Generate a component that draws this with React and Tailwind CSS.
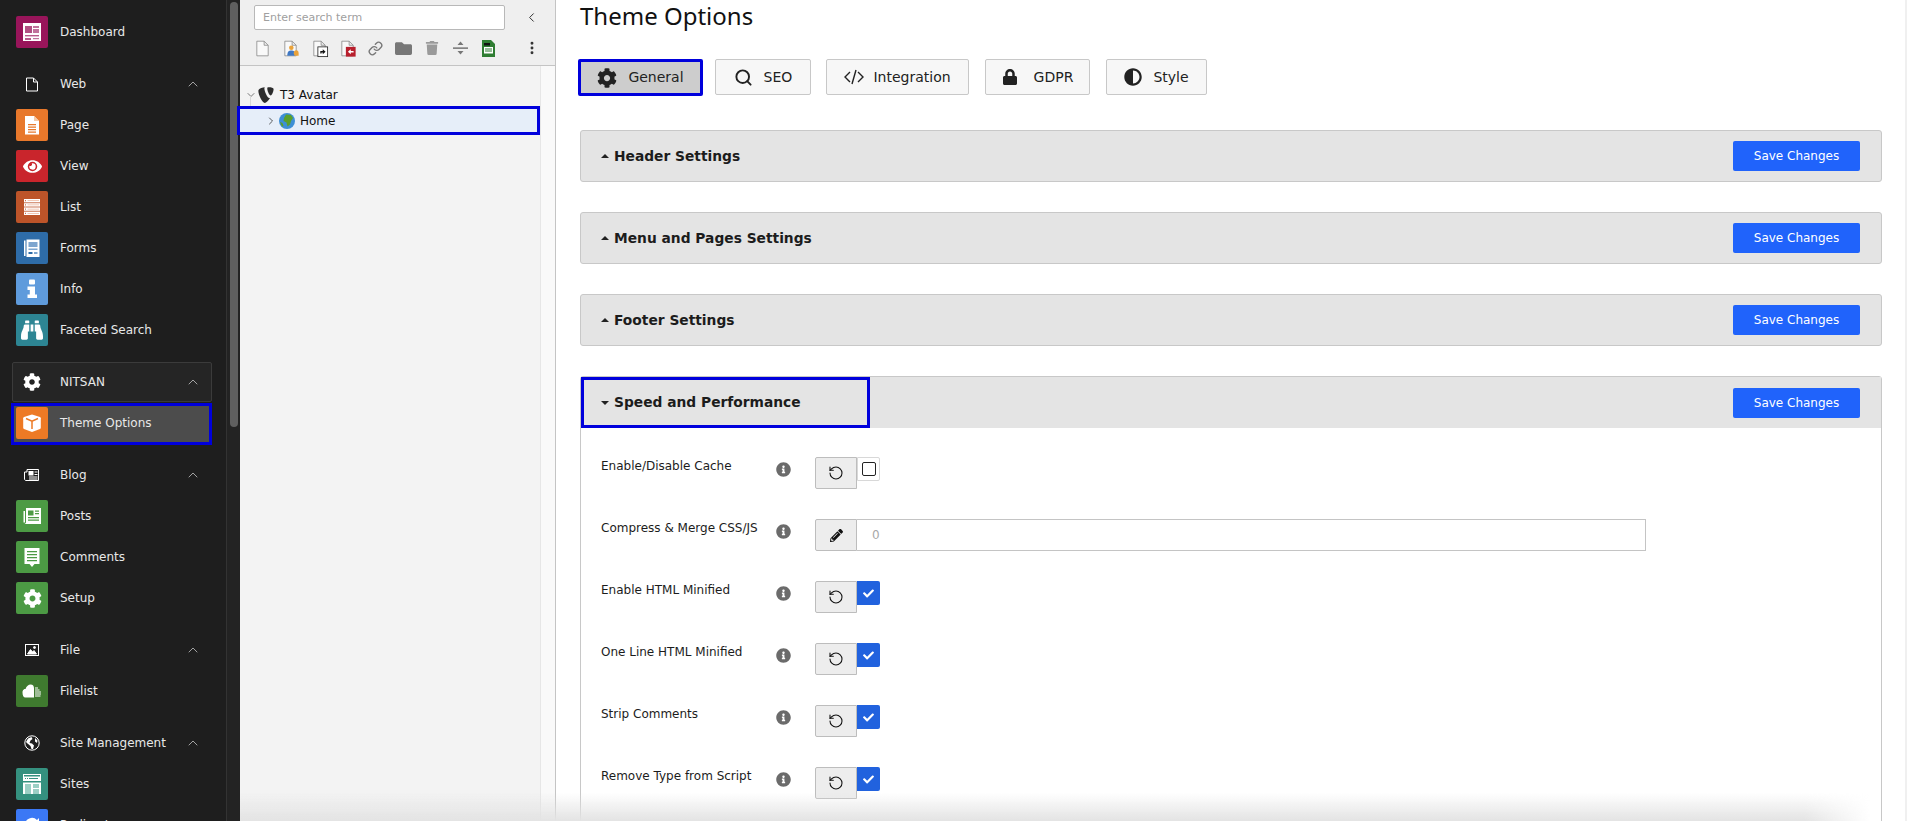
import React from "react";
import { FaCog, FaEye, FaBinoculars, FaTypo3, FaLock, FaAdjust, FaInfoCircle, FaPencilAlt, FaFolder, FaTrash, FaCheck } from "react-icons/fa";
import { ChevronUp, ChevronLeft, ChevronRight, ChevronDown, RotateCcw, Search, Link, EllipsisVertical } from "lucide-react";

const G = ({ children, vb = "0 0 32 32" }) => (
  <svg viewBox={vb} className="w-8 h-8" fill="#fff">{children}</svg>
);

const IconDash = () => (
  <G>
    <rect x="7" y="7" width="18" height="18" fill="#fff" />
    <rect x="9" y="10" width="7" height="7" fill="#98155a" opacity=".75" />
    <rect x="17" y="10" width="6" height="2" fill="#98155a" opacity=".6" />
    <rect x="17" y="13" width="6" height="4" fill="#98155a" opacity=".6" />
    <rect x="9" y="19" width="14" height="1.4" fill="#98155a" opacity=".7" />
    <rect x="9" y="22" width="6" height="2" fill="#98155a" opacity=".7" />
    <rect x="17" y="22" width="6" height="1.2" fill="#98155a" opacity=".6" />
  </G>
);
const IconPage = () => (
  <G>
    <path d="M9 7h9l5 5v13.5H9z" />
    <path d="M18 7l5 5h-5z" fill="#f6c9a6" />
    <path d="M12 15h8v1.2h-8zM12 17.5h8v1.2h-8zM12 20h8v1.2h-8zM12 22.5h8v1.2h-8z" fill="#e8782b" />
  </G>
);
const IconView = () => <div className="w-8 h-8 flex items-center justify-center text-white"><FaEye size={19} /></div>;
const IconList = () => (
  <G>
    {[8, 12.2, 16.4, 20.6].map((y) => (
      <g key={y}>
        <rect x="8" y={y} width="16" height="3.4" />
        <rect x="9" y={y + 1.2} width="1" height="1" fill="#bd5429" />
        <rect x="11.5" y={y + 1.4} width="11.5" height=".6" fill="#e9a686" />
      </g>
    ))}
  </G>
);
const IconForms = () => (
  <G>
    <path d="M8 8.5h1.5V24H8zM10.5 7.5h13V25h-13z" />
    <rect x="12.5" y="10" width="9" height="5" fill="#7ea6cf" />
    <rect x="12.5" y="16.5" width="9" height="1.5" fill="#7ea6cf" />
    <rect x="12.5" y="20" width="4" height="2" fill="#2e6ca8" />
    <rect x="18" y="20" width="3.5" height="2" fill="#7ea6cf" />
  </G>
);
const IconInfo = () => (
  <G>
    <rect x="13" y="6.5" width="6" height="5" rx="1" />
    <path d="M11.5 13.5H19v8h2V25H11.5v-3.5h2.3V17h-2.3z" />
  </G>
);
const IconBino = () => <div className="w-8 h-8 flex items-center justify-center text-white"><FaBinoculars size={22} /></div>;
const IconCube = () => (
  <G>
    <path d="M16 7.5l8 2.500c.5.2.8.6.8 1.200v9.500c0 .6-.3 1-.8 1.200l-8 3-8-3c-.5-.2-.8-.6-.8-1.200v-9.500c0-.6.3-1 .8-1.200z" />
    <path d="M10 11.5l6 2.600 6-2.600M16 14v8" stroke="#ed7a25" strokeWidth="1.5" fill="none" />
  </G>
);
const IconNews = () => (
  <G>
    <path d="M7.500 11H9v11.500H7.500z" />
    <path d="M10 8h15v16H8.500c1-.5 1.500-1 1.500-2z" />
    <rect x="12" y="10.5" width="5.5" height="5" fill="#4c9a44" />
    <path d="M19 10.5h4v1.200h-4zM19 13h4v1.200h-4zM12 17h11v1.200H12zM12 19.5h11v1.200H12z" fill="#4c9a44" />
  </G>
);
const IconComment = () => (
  <G>
    <path d="M8.500 7h15v16h-5L16 26l-2.500-3h-5z" />
    <path d="M11 10h10v1.300H11zM11 13h10v1.300H11zM11 16h10v1.300H11zM11 19h10v1.300H11z" fill="#4c9a44" />
  </G>
);
const IconSetup = () => <div className="w-8 h-8 flex items-center justify-center text-white"><FaCog size={19} /></div>;
const IconFilelist = () => (
  <G>
    <path d="M6.500 17.500c0-3 2-3.500 3-3.500 1-3 3-4.500 5-4.500 2.500 0 3.500 1.500 3.500 4v9H9.500c-2 0-3-2-3-5z" />
    <path d="M19 12.500h3v1h-3zM19 14.500h4.500v1H19zM19 16.500h6v1h-6zM19 18.500h6v1h-6zM19 20.500h5.500v1H19z" />
  </G>
);
const IconSites = () => (
  <G>
    <path d="M7 6h18v20H7z" />
    <rect x="8" y="7" width="16" height="1.5" fill="#35917f" />
    <path d="M9 10h1v1H9zM11 10h1v1h-1zM13 10h9v1h-9z" fill="#35917f" />
    <rect x="7" y="13" width="18" height="1.500" fill="#35917f" />
    <path d="M9 16h6v10H9zM17 16h6v4h-6zM17 21h6v5h-6z" fill="#9bcfc4" />
  </G>
);
const IconRedirect = () => (
  <G>
    <path d="M9 16a7 7 0 0 1 12-5l2-2v7h-7l2.500-2.500A4 4 0 0 0 12 16z" />
  </G>
);

const CatDoc = () => (
  <svg viewBox="0 0 16 16" className="w-4 h-4" fill="none" stroke="#fff" strokeWidth="1">
    <path d="M2.500 2h7l4 4v9h-11zM9.500 2v4h4" />
  </svg>
);
const CatNews = () => (
  <svg viewBox="0 0 16 16" className="w-[16px] h-[16px]" fill="none" stroke="#fff" strokeWidth="1">
    <path d="M3 2.500h11.500v11H2c-.8 0-1.500-.6-1.500-1.500V5H3z" />
    <rect x="5" y="4.500" width="4" height="3.500" fill="#fff" />
    <path d="M10.500 5h3M10.500 7.500h3M5 10h8.500M5 12h8.500" />
  </svg>
);
const CatFile = () => (
  <svg viewBox="0 0 16 16" className="w-4 h-4" fill="none" stroke="#fff" strokeWidth="1">
    <rect x="1.500" y="2.500" width="13" height="11" />
    <path d="M3.500 12l3-4.500 2 2.500 1.500-1.500 2.500 3.500z" fill="#fff" />
    <circle cx="10.500" cy="5.500" r="1" fill="#fff" />
  </svg>
);
const CatGlobe = () => (
  <svg viewBox="0 0 16 16" className="w-4 h-4" fill="none" stroke="#fff" strokeWidth="1">
    <circle cx="8" cy="8" r="7.200" />
    <path d="M4 3.500l3.500-1.500 1 2-2 1.500-1 2.500 2.500.5 2 2-1 3.500L7.500 14l-1-3-3-2.500-1.500-1.500zM11 3l2.500 2.500L13 8l-2-1.500z" fill="#fff" stroke="none" />
  </svg>
);

const Item = ({ icon, bg, label }) => (
  <div className="flex h-[41px] items-start pt-1 pl-4 gap-3 shrink-0">
    <div className={`w-8 h-8 rounded-[2px] shrink-0 ${bg}`}>{icon}</div>
    <span className="leading-8">{label}</span>
  </div>
);

const Cat = ({ icon, label, active }) => (
  <div className={`flex h-10 w-[200px] ml-3 mt-[11px] mb-px items-center shrink-0 border rounded-[2px] pl-[3px] ${active ? "border-[#3b3b3b] bg-[#252525]" : "border-transparent"}`}>
    <div className="w-8 flex justify-center text-white">{icon}</div>
    <span className="ml-3">{label}</span>
    <ChevronUp className="ml-auto mr-[10px] text-[#c4c4c4]" size={16} strokeWidth={1.2} />
  </div>
);

const Sidebar = () => (
  <div className="w-[226px] shrink-0 bg-[#1e1e1e] text-[#e8e8e8] text-[12px] flex flex-col pt-3 overflow-hidden">
    <Item icon={<IconDash />} bg="bg-[#98155a]" label="Dashboard" />
    <Cat icon={<CatDoc />} label="Web" />
    <Item icon={<IconPage />} bg="bg-[#e8782b]" label="Page" />
    <Item icon={<IconView />} bg="bg-[#c9252c]" label="View" />
    <Item icon={<IconList />} bg="bg-[#bd5429]" label="List" />
    <Item icon={<IconForms />} bg="bg-[#2e6ca8]" label="Forms" />
    <Item icon={<IconInfo />} bg="bg-[#5f9bdc]" label="Info" />
    <Item icon={<IconBino />} bg="bg-[#2d8593]" label="Faceted Search" />
    <Cat active icon={<FaCog size={18} />} label="NITSAN" />
    <div className="flex h-[42px] w-[201px] ml-[11px] items-start pt-px pl-[2px] gap-3 shrink-0 bg-[#4c4c4c] border-3 border-[#0000dc] -mb-px">
      <div className="w-8 h-8 rounded-[2px] shrink-0 bg-[#ed7a25]"><IconCube /></div>
      <span className="leading-8">Theme Options</span>
    </div>
    <Cat icon={<CatNews />} label="Blog" />
    <Item icon={<IconNews />} bg="bg-[#4c9a44]" label="Posts" />
    <Item icon={<IconComment />} bg="bg-[#4c9a44]" label="Comments" />
    <Item icon={<IconSetup />} bg="bg-[#4c9a44]" label="Setup" />
    <Cat icon={<CatFile />} label="File" />
    <Item icon={<IconFilelist />} bg="bg-[#3f7a2f]" label="Filelist" />
    <Cat icon={<CatGlobe />} label="Site Management" />
    <Item icon={<IconSites />} bg="bg-[#35917f]" label="Sites" />
    <Item icon={<IconRedirect />} bg="bg-[#3b78f5]" label="Redirects" />
  </div>
);

const Scroll = () => (
  <div className="w-[14px] shrink-0 bg-[#232323] border-l border-[#333] pt-[2px] pl-[3px]">
    <div className="w-2 h-[425px] rounded-full bg-[#5f5f5f]" />
  </div>
);

const Doc = ({ children }) => (
  <svg viewBox="0 0 16 20" className="w-[13px] h-[17px] overflow-visible" fill="#f9f9f9" stroke="#8a8a8a" strokeWidth="1">
    <path d="M1 1h9l5 5v13H1zM10 1v5h5" />
    {children}
  </svg>
);

const Toolbar = () => (
  <div className="flex items-center h-[22px] pl-[16px] pr-[17px] mt-[7px]">
    <div className="w-[28px]"><Doc /></div>
    <div className="w-[29px]">
      <Doc>
        <circle cx="9" cy="9" r="2.800" fill="#e9a23a" stroke="none" />
        <path d="M4 19c0-5 2-6.500 5-6.500s5 1.500 5 6.500z" fill="#3f78c4" stroke="none" />
        <path d="M12 16c0-3 1-4 3-4s3 1 3 4v3h-5z" fill="#e9a23a" stroke="none" />
      </Doc>
    </div>
    <div className="w-[28px]">
      <Doc>
        <rect x="6" y="8" width="12" height="12" fill="#fff" stroke="#222" strokeWidth="1" />
        <path d="M9 16v-3h3v-2l3.500 3-3.500 3v-2h-1.500v1z" fill="#111" stroke="none" />
      </Doc>
    </div>
    <div className="w-[27px]">
      <Doc>
        <rect x="6" y="8" width="12" height="12" fill="#b81f2d" stroke="none" />
        <path d="M15.500 13v2h-3.500v2l-3.500-3 3.500-3v2z" fill="#fff" stroke="none" />
      </Doc>
    </div>
    <div className="w-[27px] text-[#777]"><Link size={15} strokeWidth={2.2} /></div>
    <div className="w-[30px] text-[#777]"><FaFolder size={17} /></div>
    <div className="w-[28px] text-[#9a9a9a]"><FaTrash size={14} /></div>
    <div className="w-[29px]">
      <svg viewBox="0 0 16 16" className="w-4 h-4"><path d="M0 7.500h15v1.200H0z" fill="#555" /><path d="M7.500 1.500l3 3.500h-6zM7.500 14.500l-3-3.500h6z" fill="#777" /></svg>
    </div>
    <div>
      <svg viewBox="0 0 13 17" className="w-[13px] h-[17px]"><path d="M0 0h9l4 4v13H0z" fill="#2f7d32" /><path d="M2 3h6v2.500H2z" fill="#111" /><path d="M2 7h9v6.500H2z" fill="#fff" /><path d="M3 8.500h7v1H3zM3 10.500h7v1H3z" fill="#2f7d32" /></svg>
    </div>
    <div className="ml-auto -mr-[2px] text-[#333]"><EllipsisVertical size={16} strokeWidth={2.4} /></div>
  </div>
);

const Tree = () => (
  <div className="w-[316px] shrink-0 bg-[#f3f3f3] border-r border-[#c4c4c4] flex flex-col">
    <div className="h-[66px] shrink-0 bg-[#efefef] border-b border-[#c4c4c4] pt-[5px]">
      <div className="flex items-center pl-[14px] pr-[16px]">
        <div className="w-[251px] h-[25px] bg-white border border-[#b8b8b8] rounded-[2px] px-2 text-[11px] leading-[23px] text-[#a0a0a0]">Enter search term</div>
        <ChevronLeft className="ml-auto text-[#333]" size={15} strokeWidth={1.6} />
      </div>
      <Toolbar />
    </div>
    <div className="flex flex-1">
      <div className="w-[300px] text-[12px] text-[#111] pt-[17px] relative">
        <div className="absolute left-[10px] top-[30px] h-[24px] w-[18px] border-l border-b border-[#d8d8d8]" />
        <div className="flex items-center h-[23px] pl-[5px]">
          <ChevronDown size={12} strokeWidth={1.4} className="text-[#444]" />
          <FaTypo3 size={18} className="text-[#2c2c2c]" />
          <span className="ml-[5px]">T3 Avatar</span>
        </div>
        <div className="relative flex items-center h-[29px] -ml-[3px] w-[303px] bg-[#e6eef9] border-3 border-[#0000dc] pl-[25px] pt-px">
          <ChevronRight size={12} strokeWidth={1.6} className="text-[#333]" />
          <svg viewBox="0 0 16 16" className="w-4 h-4 ml-[2px]">
            <circle cx="8" cy="8" r="8" fill="#3d8fd6" />
            <path d="M7 1.500l5 .5 2 3-2 3-1 3.500-2.500 2-1-4-3-1.500.5-3z" fill="#5aa02c" />
            <path d="M1 9l2.500 1 1 3L3 13.500z" fill="#5aa02c" />
          </svg>
          <span className="ml-[5px]">Home</span>
        </div>
      </div>
      <div className="flex-1 bg-[#f9f9f9] border-l border-[#e6e6e6]" />
    </div>
  </div>
);

const Tab = ({ icon, label, w, gap, active }) => (
  <div
    className={`flex items-center justify-center rounded-[2px] text-[14px] text-[#222] ${gap} ${w} ${
      active ? "bg-[#cdcdcd] border-3 border-[#0000dc] h-[37px] -ml-[2px]" : "h-[36px] bg-[#f7f7f7] border border-[#c8c8c8]"
    }`}
  >
    {icon}
    <span>{label}</span>
  </div>
);

const SaveBtn = () => (
  <div className="w-[127px] h-[30px] bg-[#2063fb] rounded-[2px] text-white text-[12px] flex items-center justify-center shrink-0">Save Changes</div>
);

const Card = ({ title }) => (
  <div className="h-[52px] mb-[30px] bg-[#e4e4e4] border border-[#c8c8c8] rounded-[3px] flex items-center pl-[20px] pr-[21px]">
    <div className="w-0 h-0 border-x-[4px] border-x-transparent border-b-[4px] border-b-[#222]" />
    <span className="ml-[5px] font-bold text-[13.8px] text-[#1c1c1c]">{title}</span>
    <div className="ml-auto"><SaveBtn /></div>
  </div>
);

const Row = ({ label, children }) => (
  <div className="flex items-start h-[62px] shrink-0">
    <div className="w-[175px] leading-[18px] text-[12px] text-[#1c1c1c] shrink-0">{label}</div>
    <div className="w-[15px] mt-[5px] text-[#6b6b6b] shrink-0"><FaInfoCircle size={15} /></div>
    <div className="flex items-start ml-[24px]">{children}</div>
  </div>
);

const Btn = ({ children }) => (
  <div className="w-[42px] h-[32px] bg-[#ededed] border border-[#bdbdbd] rounded-l-[2px] flex items-center justify-center text-[#111] shrink-0">{children}</div>
);

const Reset = () => <Btn><RotateCcw size={16} strokeWidth={1.6} /></Btn>;

const Checked = () => (
  <div className="w-[23px] h-[24px] bg-[#2162de] rounded-r-[2px] flex items-center justify-center text-white"><FaCheck size={11} /></div>
);

const Main = () => (
  <div className="flex-1 bg-white pl-[24px] pr-[23px] border-r-2 border-[#f0f0f0] overflow-hidden">
    <div className="font-['Noto_Sans',sans-serif] text-[24px] leading-[32px] text-[#111]">Theme Options</div>
    <div className="flex mt-[27px] h-[37px]">
      <Tab active w="w-[125px]" gap="mr-[12px]" icon={<FaCog size={20} className="mr-[11px] text-[#222]" />} label="General" />
      <Tab w="w-[96px]" gap="mr-[15px]" icon={<Search size={19} strokeWidth={2.4} className="mr-[11px]" />} label="SEO" />
      <Tab
        w="w-[143px]"
        gap="mr-[16px]"
        icon={
          <svg viewBox="0 0 20 20" className="w-5 h-5 mr-[9px]" fill="none" stroke="#222" strokeWidth="1.4">
            <path d="M6 5l-5 5 5 5M14 5l5 5-5 5M12 3L8 17" />
          </svg>
        }
        label="Integration"
      />
      <Tab w="w-[105px]" gap="mr-[16px]" icon={<FaLock size={16} className="mr-[16px]" />} label="GDPR" />
      <Tab w="w-[101px]" icon={<FaAdjust size={18} className="mr-[11px]" />} label="Style" />
    </div>
    <div className="mt-[34px]">
      <Card title="Header Settings" />
      <Card title="Menu and Pages Settings" />
      <Card title="Footer Settings" />
      <div className="border border-[#c8c8c8] rounded-[3px] h-[600px]">
        <div className="relative h-[51px] bg-[#e4e4e4] flex items-center pl-[20px] pr-[21px]">
          <div className="absolute left-0 top-0 w-[289px] h-[51px] border-3 border-[#0000dc]" />
          <div className="w-0 h-0 border-x-[4px] border-x-transparent border-t-[4px] border-t-[#222]" />
          <span className="ml-[5px] font-bold text-[13.8px] text-[#1c1c1c]">Speed and Performance</span>
          <div className="ml-auto"><SaveBtn /></div>
        </div>
        <div className="pl-[20px] pt-[29px] flex flex-col">
          <Row label="Enable/Disable Cache">
            <Reset />
            <div className="w-[23px] h-[24px] bg-white border border-[#d8d8d8] rounded-r-[2px] flex items-center justify-center">
              <div className="w-[14px] h-[14px] border border-[#222] rounded-[2px]" />
            </div>
          </Row>
          <Row label="Compress & Merge CSS/JS">
            <Btn><FaPencilAlt size={13} /></Btn>
            <div className="w-[789px] h-[32px] bg-white border border-[#c4c4c4] border-l-0 pl-[15px] text-[12px] leading-[30px] text-[#a8a8a8]">0</div>
          </Row>
          <Row label="Enable HTML Minified"><Reset /><Checked /></Row>
          <Row label="One Line HTML Minified"><Reset /><Checked /></Row>
          <Row label="Strip Comments"><Reset /><Checked /></Row>
          <Row label="Remove Type from Script"><Reset /><Checked /></Row>
        </div>
      </div>
    </div>
  </div>
);

export default function App() {
  return (
    <div className="relative flex w-[1907px] h-[821px] overflow-hidden font-['DejaVu_Sans',sans-serif]">
      <Sidebar />
      <Scroll />
      <Tree />
      <Main />
      <div className="absolute left-[240px] bottom-0 w-[1630px] h-[28px] bg-gradient-to-t from-[#e3e3e3] to-transparent [mask-image:linear-gradient(to_right,black_96%,transparent)]" />
    </div>
  );
}
